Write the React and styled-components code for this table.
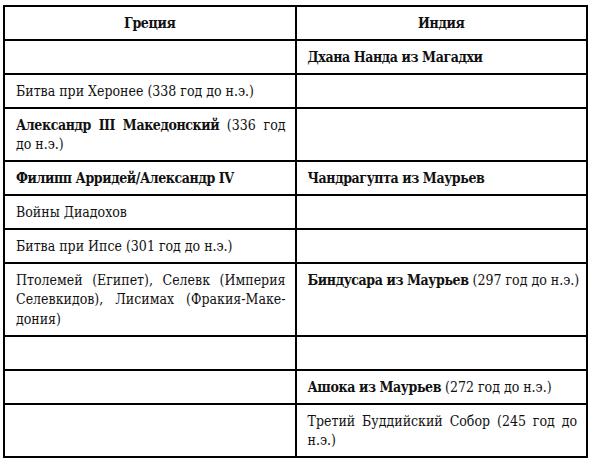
import React from "react";
import styled, { createGlobalStyle } from "styled-components";

const Global = createGlobalStyle`
  html, body { margin: 0; padding: 0; background: #fff; }
  body { font-family: "DejaVu Serif Condensed", "DejaVu Serif", serif; color: #111; }
`;

const Page = styled.div`
  padding: 5px 0 0 3px;
`;

const Table = styled.table`
  border-collapse: collapse;
  width: 585px;
  table-layout: fixed;
  font-family: "DejaVu Serif Condensed", "DejaVu Serif", serif;
  font-stretch: condensed;
  font-size: 14px;
  line-height: 19.3px;
  color: #111;
`;

const Head = styled.th`
  border: 2px solid #000;
  padding: 7px 13px 5.7px;
  font-weight: bold;
  letter-spacing: -0.35px;
  text-align: center;
  width: 50%;
`;

const Cell = styled.td`
  border: 2px solid #000;
  padding: 7px 9px 5.7px 11px;
  text-align: justify;
  vertical-align: top;
  hyphens: manual;
  height: 19.3px;
  white-space: ${(p) => (p.$nowrap ? "nowrap" : "normal")};
`;

const B = styled.b`
  font-weight: bold;
  letter-spacing: -0.4px;
`;

const rows = [
  [null, <B>Дхана Нанда из Магадхи</B>],
  ["Битва при Херонее (338 год до н.э.)", null],
  [<><B>Александр III Македонский</B> (336 год до н.э.)</>, null],
  [<B>Филипп Арридей/Александр IV</B>, <B>Чандрагупта из Маурьев</B>],
  ["Войны Диадохов", null],
  ["Битва при Ипсе (301 год до н.э.)", null],
  [
    "Птолемей (Египет), Селевк (Империя Селевкидов), Лисимах (Фракия-Маке\u00ADдония)",
    <><B>Биндусара из Маурьев</B> (297 год до н.э.)</>,
    true,
  ],
  [null, null],
  [null, <><B>Ашока из Маурьев</B> (272 год до н.э.)</>],
  [null, "Третий Буддийский Собор (245 год до н.э.)"],
];

export default function App() {
  return (
    <>
      <Global />
      <Page>
        <Table>
          <thead>
            <tr>
              <Head>Греция</Head>
              <Head>Индия</Head>
            </tr>
          </thead>
          <tbody>
            {rows.map((r, i) => (
              <tr key={i}>
                <Cell>{r[0]}</Cell>
                <Cell $nowrap={r[2]}>{r[1]}</Cell>
              </tr>
            ))}
          </tbody>
        </Table>
      </Page>
    </>
  );
}
